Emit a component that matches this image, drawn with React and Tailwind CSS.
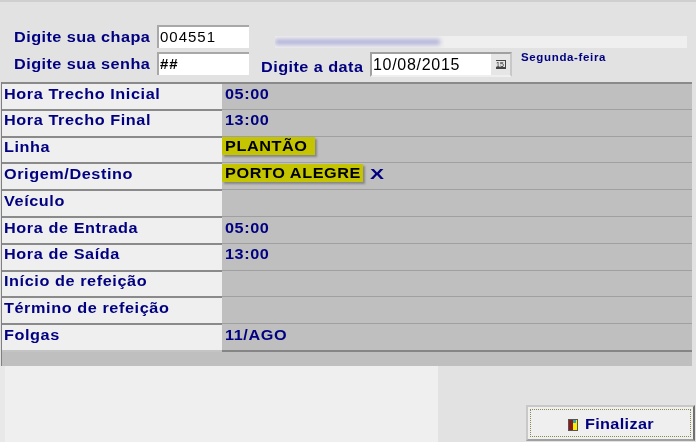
const rows = [
  ["Hora Trecho Inicial", "05:00"],
  ["Hora Trecho Final", "13:00"],
  ["Linha", "PLANTÃO", "hl"],
  ["Origem/Destino", "PORTO ALEGRE", "hlx"],
  ["Veículo", ""],
  ["Hora de Entrada", "05:00"],
  ["Hora de Saída", "13:00"],
  ["Início de refeição", ""],
  ["Término de refeição", ""],
  ["Folgas", "11/AGO"],
];

function Wide({ children }) {
  return <span className="inline-block origin-left scale-x-[1.12] whitespace-nowrap">{children}</span>;
}

function Highlight({ children, short }) {
  return (
    <span className={`bg-[#c4c400] text-black h-[18px] -mt-[2px] flex items-center pl-[3px] shadow-[2px_2px_2px_rgba(0,0,0,0.3)] whitespace-nowrap ${short ? "w-[93px]" : "w-[141px]"}`}>
      <Wide>{children}</Wide>
    </span>
  );
}

function Row({ label, value, kind, first }) {
  return (
    <div className="flex h-[26.8px] shrink-0 text-[14.5px] font-bold text-[#000080] tracking-[0.52px] leading-none">
      <div className="w-[220px] bg-[#efefef] border-t-2 border-[#8a8a8a] pl-[2px] pb-[5px] flex items-center"><Wide>{label}</Wide></div>
      <div className={`flex-1 bg-[#bfbfbf] flex items-center pb-[4px] ${first ? "border-t-2 border-[#8a8a8a]" : "border-t border-[#a0a0a0]"}`}>
        {kind === "hl" && <Highlight short>{value}</Highlight>}
        {kind === "hlx" && (
          <>
            <Highlight>{value}</Highlight>
            <span className="ml-[9px] -mt-[2px] text-[15px] tracking-normal scale-x-[1.4] font-bold">X</span>
          </>
        )}
        {!kind && <span className="pl-[3px]"><Wide>{value}</Wide></span>}
      </div>
    </div>
  );
}

function Field({ label, value, bold }) {
  return (
    <div className="flex items-start h-[24px]">
      <span className="w-[143px] h-[24px] pt-[2px] flex items-center text-[14.5px] font-bold text-[#000080] tracking-[0.4px]"><Wide>{label}</Wide></span>
      <div className={`w-[92px] h-[23px] bg-white border-t-2 border-l-2 border-[#a8a8a8] pl-[1px] flex items-center text-[15px] text-black tracking-[1px] ${bold ? "font-bold" : "font-medium"}`}>
        {value}
      </div>
    </div>
  );
}

export default function App() {
  return (
    <div className="w-[696px] h-[442px] overflow-hidden bg-[#e2e2e2] flex flex-col blur-[0.4px]" style={{ fontFamily: '"Liberation Sans", Arial, sans-serif' }}>
      <div className="h-[82px] shrink-0 border-t-2 border-[#cfcfcf] flex pl-[14px] pt-[23px]">
        <div className="flex flex-col gap-[3px]">
          <Field label="Digite sua chapa" value="004551" />
          <Field label="Digite sua senha" value="##" bold />
        </div>
        <div className="ml-[26px] flex flex-col w-[412px] pt-[11px]">
          <div className="h-[12px] bg-[#efefef] overflow-hidden flex items-center">
            <div className="w-[165px] h-[6px] bg-[#b4b4da] blur-[2px]" />
          </div>
          <div className="flex items-start mt-[4px] -ml-[14px]">
            <span className="w-[109px] mt-[5px] text-[14.5px] font-bold text-[#000080] tracking-[0.4px]"><Wide>Digite a data</Wide></span>
            <div className="w-[142px] h-[25px] bg-white border-2 border-t-[#a0a0a0] border-l-[#a0a0a0] border-r-[#c8c8c8] border-b-[#efefef] flex items-center pl-[1px] text-[16px] font-medium text-black tracking-[0.7px] justify-between leading-none">
              10/08/2015
              <span className="w-[19px] h-[21px] bg-[#e6e6e6] flex items-center justify-center">
                <span className="w-[10px] h-[9px] border-b-2 border-r border-t border-[#444] text-[7px] leading-[7px] text-center text-[#222] tracking-normal">15</span>
              </span>
            </div>
            <span className="ml-[9px] -mt-[3px] text-[11.5px] font-bold text-[#000080] tracking-[0.65px] whitespace-nowrap">Segunda-feira</span>
          </div>
        </div>
      </div>

      <div className="flex flex-col ml-[1px] border-l border-[#808080] mr-[4px]">
        {rows.map((r, i) => (
          <Row key={r[0]} label={r[0]} value={r[1]} kind={r[2]} first={i === 0} />
        ))}
        <div className="flex h-[2px] shrink-0">
          <div className="w-[220px] bg-[#c4c4c4]" />
          <div className="flex-1 bg-[#858585]" />
        </div>
        <div className="h-[14px] shrink-0 bg-[#bfbfbf]" />
      </div>

      <div className="flex-1 flex min-h-0">
        <div className="w-[438px] bg-[#efefef] border-l-[5px] border-[#e8e8e8]" />
        <div className="flex-1 bg-[#e2e2e2] flex items-end justify-end pr-[1px] pb-[1px]">
          <button className="w-[169px] h-[36px] bg-[#efefef] border-2 border-t-[#c8c8c8] border-l-[#c8c8c8] border-r-[#707070] border-b-[#a0a0a0] p-[2px]">
            <span className="w-full h-full border border-dotted border-[#8a8a50] flex items-center justify-center gap-[7px] text-[14.5px] font-bold text-[#000080] tracking-[0.3px] pr-[7px] pt-[3px]">
              <svg width="10" height="12" viewBox="0 0 10 12">
                <rect x="0" y="0" width="10" height="12" fill="#555" />
                <rect x="1" y="1" width="8" height="10" fill="#ffee00" />
                <rect x="1" y="1" width="4" height="10" fill="#8b1a1a" />
                <rect x="5" y="1" width="3" height="3" fill="#2aa8b0" />
              </svg>
              <Wide>Finalizar</Wide>
            </span>
          </button>
        </div>
      </div>
    </div>
  );
}
